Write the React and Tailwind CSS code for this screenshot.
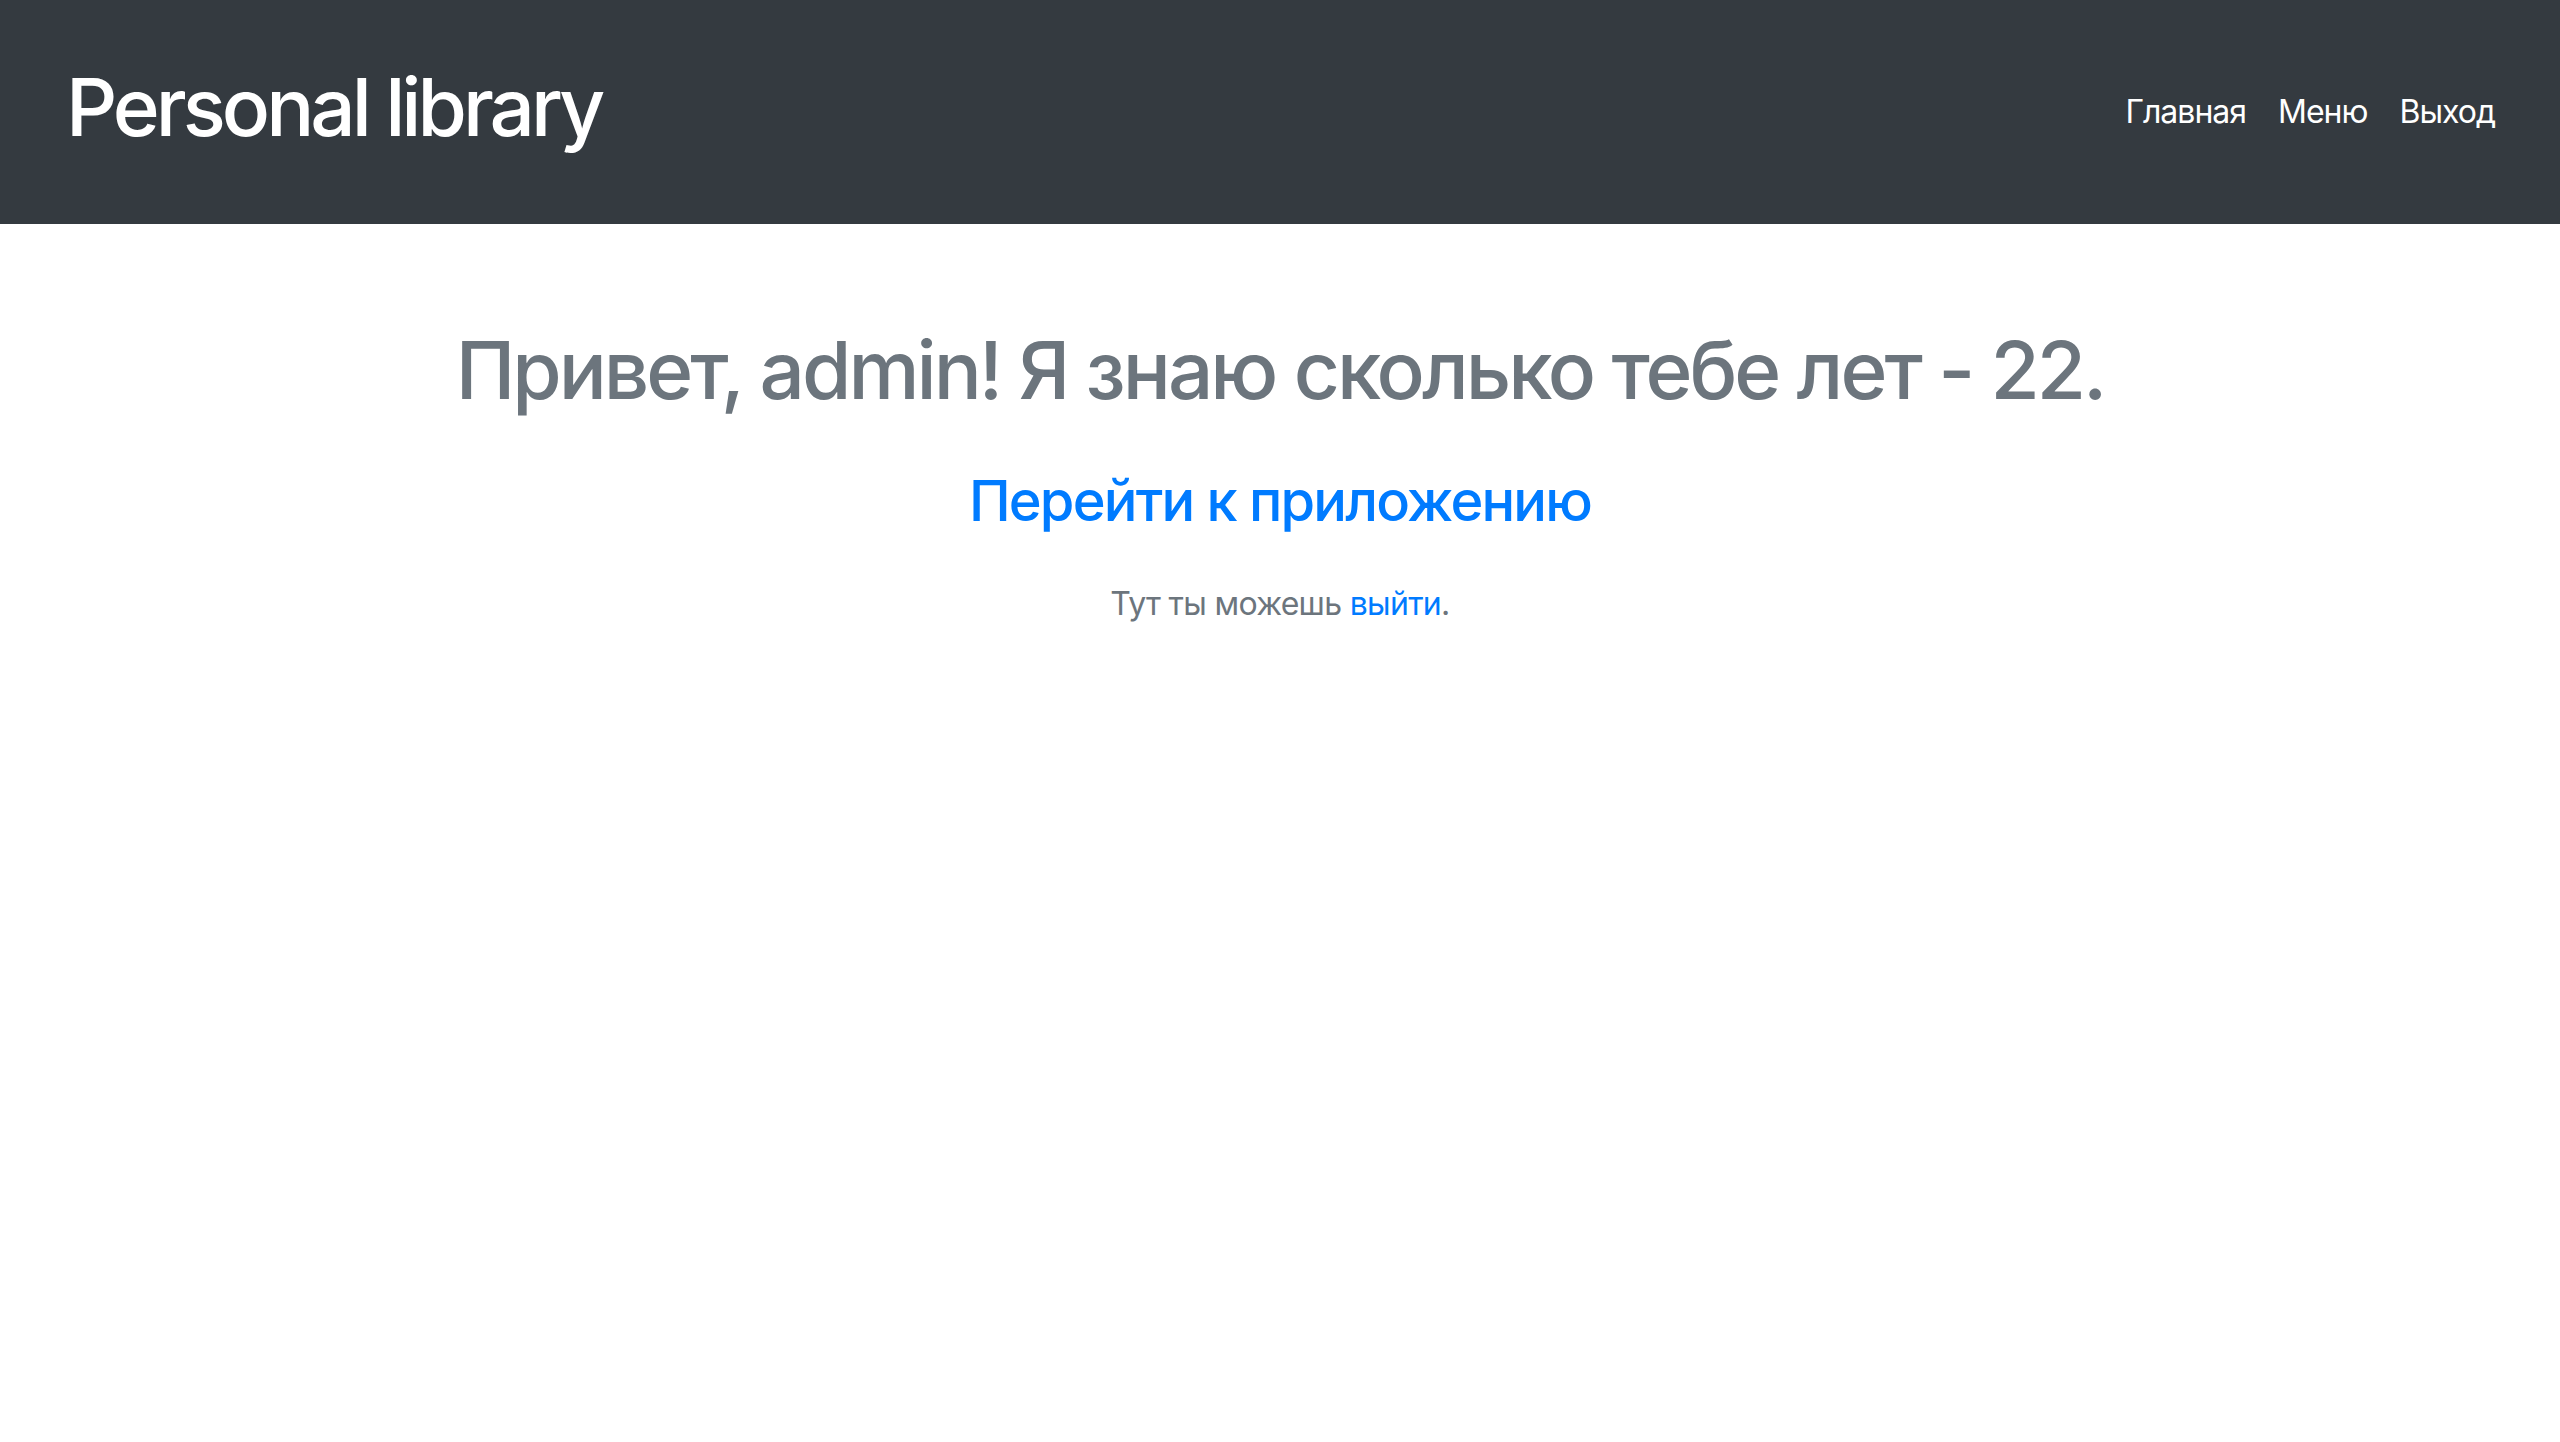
import React from "react";

const App = () => {
  return (
    <div className="min-h-screen bg-white" style={{ fontFamily: "Inter, 'Noto Sans', sans-serif" }}>
      <header className="h-[224px] bg-[#343a40] flex items-center justify-between pl-[66px] pr-[49px]">
        <a href="#" className="mb-[10px] text-[80px] leading-[1.2] font-medium text-white tracking-[-4px]">
          Personal library
        </a>
        <nav className="flex items-center">
          <a href="#" className="px-4 text-[32px] text-white tracking-[-1px]">Главная</a>
          <a href="#" className="px-4 text-[32px] text-white tracking-[-1px]">Меню</a>
          <a href="#" className="px-4 text-[32px] text-white tracking-[-1px]">Выход</a>
        </nav>
      </header>
      <main className="flex flex-col items-center pt-[98px]">
        <h1 className="text-[80px] leading-[1.2] font-medium text-[#6c757d] tracking-[-3px]">
          Привет, admin! Я знаю сколько тебе лет - 22.
        </h1>
        <a href="#" className="mt-[50px] text-[56px] leading-[1.2] font-medium text-[#007bff] tracking-[-1.8px]">
          Перейти к приложению
        </a>
        <p className="mt-[45px] text-[32px] leading-[1.5] text-[#6c757d] tracking-[-0.7px]">
          Тут ты можешь <a href="#" className="text-[#007bff]">выйти</a>.
        </p>
      </main>
    </div>
  );
};

export default App;
